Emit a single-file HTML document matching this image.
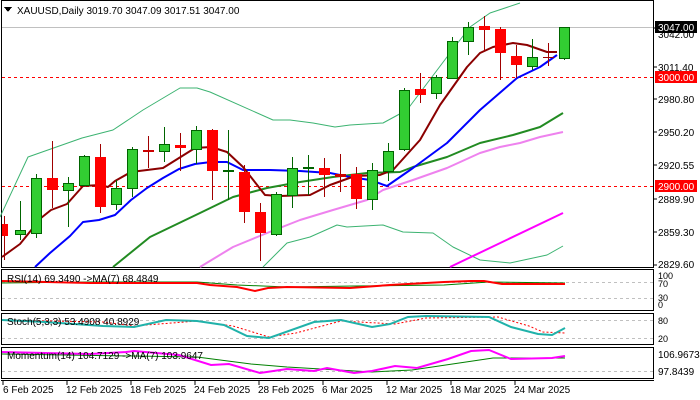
<!DOCTYPE html>
<html><head><meta charset="utf-8"><style>
html,body{margin:0;padding:0;background:#fff;width:700px;height:400px;overflow:hidden}
svg{display:block}
text{font-family:"Liberation Sans",sans-serif;font-size:10px;fill:#000}
</style></head><body>
<svg width="700" height="400" viewBox="0 0 700 400" xmlns="http://www.w3.org/2000/svg" shape-rendering="crispEdges">
<rect width="700" height="400" fill="#fff"/>
<!-- frames -->
<rect x="1.5" y="0.5" width="652" height="267" fill="none" stroke="#000"/>
<rect x="1.5" y="269.5" width="652" height="41" fill="none" stroke="#000"/>
<rect x="1.5" y="313.5" width="652" height="31" fill="none" stroke="#000"/>
<rect x="1.5" y="347.5" width="652" height="31" fill="none" stroke="#000"/>
<line x1="1" y1="380.5" x2="654" y2="380.5" stroke="#000"/>
<!-- price line and levels -->
<line x1="2" y1="27.5" x2="653" y2="27.5" stroke="#c0c0c0"/>
<line x1="2" y1="77.5" x2="653" y2="77.5" stroke="#f00" stroke-dasharray="3,3"/>
<line x1="2" y1="186.5" x2="653" y2="186.5" stroke="#f00" stroke-dasharray="3,3"/>
<g shape-rendering="auto" fill="none" stroke-linejoin="round">
<!-- bands -->
<polyline stroke="#3cb371" stroke-width="1" points="0,217 28,157 82,138 113,130 143,110 180,88 197,88 210,92 273,120 290,120 313,123 335,127 350,125 383,123 407,110 450,53 470,27 490,13 520,3"/>
<polyline stroke="#3cb371" stroke-width="1" points="263,267 287,243 310,237 337,225 347,227 383,225 403,232 433,233 453,247 480,260 510,263 547,255 563,246"/>
<!-- violet -->
<polyline stroke="#ee82ee" stroke-width="2" points="200,267 233,247 267,233 300,220 333,210 367,200 383,190 413,180 447,168 480,153 500,147 520,143 540,137 563,132"/>
<!-- magenta -->
<polyline stroke="#ff00ff" stroke-width="2" points="450,267 563,213"/>
<!-- green MA -->
<polyline stroke="#228b22" stroke-width="2" points="113,267 150,237 200,213 233,197 267,188 300,182 333,177 367,173 400,172 413,167 447,157 480,143 513,135 540,127 563,113"/>
<!-- blue -->
<polyline stroke="#0000ff" stroke-width="2" points="35,267 50,253 70,236 83,222 99,220 115,215 131,200 147,188 163,178 179,169 195,164 211,162 227,162 243,170 270,170 300,171 330,173 350,177 370,180 387,186 413,168 447,143 480,110 517,78 540,67 557,55"/>
<!-- dark red -->
<polyline stroke="#8b0000" stroke-width="2" points="2,257 20,244 41,218 51,210 67,204 83,186 100,185 108,187 115,181 131,172 147,170 163,168 179,158 195,148 211,147 227,152 243,167 265,195 280,196 310,195 330,185 355,176 380,175 393,170 420,140 440,105 467,67 480,53 493,47 513,43 527,45 547,52 557,52"/>
</g>
<!-- candles -->
<g id="c" stroke-width="1"></g>
<!-- axis labels main -->
<g>
<text x="658" y="38">3042.00</text>
<rect x="655" y="21" width="42" height="12" fill="#000"/><text x="658" y="31" style="fill:#fff">3047.00</text>
<text x="658" y="71">3011.40</text>
<rect x="655" y="71" width="42" height="12" fill="#f00"/><text x="658" y="81" style="fill:#fff">3000.00</text>
<text x="658" y="103">2980.80</text>
<text x="658" y="136">2950.20</text>
<text x="658" y="169">2920.55</text>
<rect x="655" y="180" width="42" height="12" fill="#f00"/><text x="658" y="190" style="fill:#fff">2900.00</text>
<text x="658" y="203">2889.90</text>
<text x="658" y="236">2859.30</text>
<text x="658" y="268">2829.60</text>
</g>
<g stroke="#000"><line x1="653" y1="28" x2="657" y2="28"/><line x1="653" y1="67" x2="657" y2="67"/><line x1="653" y1="99" x2="657" y2="99"/><line x1="653" y1="132" x2="657" y2="132"/><line x1="653" y1="165" x2="657" y2="165"/><line x1="653" y1="199" x2="657" y2="199"/><line x1="653" y1="232" x2="657" y2="232"/><line x1="653" y1="265" x2="657" y2="265"/></g>
<path d="M4 7 L12 7 L8 12 Z" fill="#000"/>
<text x="17" y="14">XAUUSD,Daily  3019.70 3047.09 3017.51 3047.00</text>
<!-- RSI -->
<line x1="2" y1="282.5" x2="653" y2="282.5" stroke="#c0c0c0" stroke-dasharray="3,3"/>
<line x1="2" y1="298.5" x2="653" y2="298.5" stroke="#c0c0c0" stroke-dasharray="3,3"/>
<g shape-rendering="auto" fill="none">
<polyline stroke="#008000" stroke-width="1" points="2,283 90,282 197,282 237,285 287,287 354,286 444,285 489,282 565,283"/>
<polyline stroke="#f00" stroke-width="2" points="2,281 90,283 134,283 197,283 210,285 237,287 255,291 268,288 287,287 350,288 390,285 444,282 471,281 484,281 502,284 565,284"/>
</g>
<text x="7" y="282">RSI(14) 69.3490  -&gt;MA(7) 68.4849</text>
<text x="658" y="279" style="font-size:9px">100</text><text x="658" y="287" style="font-size:9px">70</text><text x="658" y="301" style="font-size:9px">30</text><text x="658" y="308" style="font-size:9px">0</text>
<!-- Stoch -->
<line x1="2" y1="320.5" x2="653" y2="320.5" stroke="#c0c0c0" stroke-dasharray="3,3"/>
<line x1="2" y1="338.5" x2="653" y2="338.5" stroke="#c0c0c0" stroke-dasharray="3,3"/>
<g shape-rendering="auto" fill="none">
<polyline stroke="#f00" stroke-width="1" stroke-dasharray="2,2" points="2,320 103,322 134,326 197,321 233,326 269,337 296,333 341,321 395,324 426,318 498,317 529,326 543,332 565,333"/>
<polyline stroke="#20b2aa" stroke-width="2" points="2,320 45,322 103,326 134,327 166,320 197,321 224,325 247,336 269,338 314,322 341,320 372,327 390,324 408,317 426,316 489,317 511,327 538,334 552,335 565,328"/>
</g>
<text x="7" y="325">Stoch(5,3,3) 53.4908 40.8929</text>
<text x="658" y="324" style="font-size:9px">80</text><text x="658" y="342" style="font-size:9px">20</text>
<!-- Momentum -->
<line x1="2" y1="371.5" x2="653" y2="371.5" stroke="#c0c0c0" stroke-dasharray="3,3"/>
<g shape-rendering="auto" fill="none">
<polyline stroke="#008000" stroke-width="1" points="2,354 197,357 251,364 287,367 372,372 412,370 493,358 565,358"/>
<polyline stroke="#ff00ff" stroke-width="2" points="2,352 45,353 90,354 126,352 134,351 179,355 211,365 229,364 260,373 287,369 314,371 327,368 354,373 372,371 395,366 417,368 448,359 471,351 489,350 511,359 552,358 565,356"/>
</g>
<text x="7" y="359">Momentum(14) 104.7129  -&gt;MA(7) 103.9647</text>
<text x="658" y="358">106.9673</text><text x="658" y="375">97.8439</text>
<!-- dates -->
<g stroke="#000"><line x1="3" y1="380" x2="3" y2="385"/><line x1="67" y1="380" x2="67" y2="385"/><line x1="131" y1="380" x2="131" y2="385"/><line x1="195" y1="380" x2="195" y2="385"/><line x1="259" y1="380" x2="259" y2="385"/><line x1="323" y1="380" x2="323" y2="385"/><line x1="387" y1="380" x2="387" y2="385"/><line x1="451" y1="380" x2="451" y2="385"/><line x1="515" y1="380" x2="515" y2="385"/></g>
<text x="3" y="393">6 Feb 2025</text><text x="66" y="393">12 Feb 2025</text><text x="130" y="393">18 Feb 2025</text><text x="194" y="393">24 Feb 2025</text><text x="258" y="393">28 Feb 2025</text><text x="322" y="393">6 Mar 2025</text><text x="386" y="393">12 Mar 2025</text><text x="450" y="393">18 Mar 2025</text><text x="514" y="393">24 Mar 2025</text>
<!-- candles drawn explicitly -->
<g>
<line x1="4.5" y1="216" x2="4.5" y2="260" stroke="#a00000"/><rect x="2" y="224" width="6" height="12" fill="#f00"/>
<line x1="20.5" y1="201" x2="20.5" y2="240" stroke="#006400"/><rect x="15.5" y="230.5" width="10" height="4" fill="#32cd32" stroke="#006400"/>
<line x1="36.5" y1="174" x2="36.5" y2="238" stroke="#006400"/><rect x="31.5" y="178.5" width="10" height="55" fill="#32cd32" stroke="#006400"/>
<line x1="52.5" y1="141" x2="52.5" y2="208" stroke="#a00000"/><rect x="47" y="178" width="11" height="12" fill="#f00"/>
<line x1="68.5" y1="177" x2="68.5" y2="227" stroke="#006400"/><rect x="63.5" y="183.5" width="10" height="7" fill="#32cd32" stroke="#006400"/>
<line x1="84.5" y1="155" x2="84.5" y2="186" stroke="#006400"/><rect x="79.5" y="156.5" width="10" height="29" fill="#32cd32" stroke="#006400"/>
<line x1="100.5" y1="144" x2="100.5" y2="213" stroke="#a00000"/><rect x="95" y="157" width="11" height="50" fill="#f00"/>
<line x1="116.5" y1="180" x2="116.5" y2="210" stroke="#006400"/><rect x="111.5" y="188.5" width="10" height="16" fill="#32cd32" stroke="#006400"/>
<line x1="132.5" y1="147" x2="132.5" y2="197" stroke="#006400"/><rect x="127.5" y="149.5" width="10" height="39" fill="#32cd32" stroke="#006400"/>
<line x1="148.5" y1="136" x2="148.5" y2="168" stroke="#a00000"/><rect x="143" y="150" width="11" height="2" fill="#c00"/>
<line x1="164.5" y1="127" x2="164.5" y2="162" stroke="#006400"/><rect x="159.5" y="144.5" width="10" height="7" fill="#32cd32" stroke="#006400"/>
<line x1="180.5" y1="133" x2="180.5" y2="171" stroke="#a00000"/><rect x="175" y="145" width="11" height="3" fill="#f00"/>
<line x1="196.5" y1="126" x2="196.5" y2="164" stroke="#006400"/><rect x="191.5" y="130.5" width="10" height="19" fill="#32cd32" stroke="#006400"/>
<line x1="212.5" y1="129" x2="212.5" y2="200" stroke="#a00000"/><rect x="207" y="130" width="11" height="41" fill="#f00"/>
<line x1="228.5" y1="130" x2="228.5" y2="200" stroke="#006400"/><rect x="223" y="170" width="11" height="2" fill="#006400"/>
<line x1="244.5" y1="165" x2="244.5" y2="223" stroke="#a00000"/><rect x="239" y="172" width="11" height="40" fill="#f00"/>
<line x1="260.5" y1="203" x2="260.5" y2="261" stroke="#a00000"/><rect x="255" y="212" width="11" height="21" fill="#f00"/>
<line x1="276.5" y1="192" x2="276.5" y2="236" stroke="#006400"/><rect x="271.5" y="194.5" width="10" height="40" fill="#32cd32" stroke="#006400"/>
<line x1="292.5" y1="157" x2="292.5" y2="208" stroke="#006400"/><rect x="287.5" y="168.5" width="10" height="27" fill="#32cd32" stroke="#006400"/>
<line x1="308.5" y1="155" x2="308.5" y2="195" stroke="#006400"/><rect x="303" y="167" width="11" height="2" fill="#006400"/>
<line x1="324.5" y1="158" x2="324.5" y2="197" stroke="#a00000"/><rect x="319" y="168" width="11" height="7" fill="#f00"/>
<line x1="340.5" y1="154" x2="340.5" y2="192" stroke="#a00000"/><rect x="335" y="174" width="11" height="3" fill="#c00"/>
<line x1="356.5" y1="167" x2="356.5" y2="209" stroke="#a00000"/><rect x="351" y="174" width="11" height="25" fill="#f00"/>
<line x1="372.5" y1="163" x2="372.5" y2="210" stroke="#006400"/><rect x="367.5" y="170.5" width="10" height="29" fill="#32cd32" stroke="#006400"/>
<line x1="388.5" y1="143" x2="388.5" y2="181" stroke="#006400"/><rect x="383.5" y="151.5" width="10" height="20" fill="#32cd32" stroke="#006400"/>
<line x1="404.5" y1="88" x2="404.5" y2="151" stroke="#006400"/><rect x="399.5" y="90.5" width="10" height="59" fill="#32cd32" stroke="#006400"/>
<line x1="420.5" y1="73" x2="420.5" y2="103" stroke="#a00000"/><rect x="415" y="89" width="11" height="6" fill="#f00"/>
<line x1="436.5" y1="75" x2="436.5" y2="99" stroke="#006400"/><rect x="431.5" y="77.5" width="10" height="16" fill="#32cd32" stroke="#006400"/>
<line x1="452.5" y1="37" x2="452.5" y2="79" stroke="#006400"/><rect x="447.5" y="41.5" width="10" height="37" fill="#32cd32" stroke="#006400"/>
<line x1="468.5" y1="22" x2="468.5" y2="55" stroke="#006400"/><rect x="463.5" y="27.5" width="10" height="14" fill="#32cd32" stroke="#006400"/>
<line x1="484.5" y1="16" x2="484.5" y2="51" stroke="#a00000"/><rect x="479" y="26" width="11" height="4" fill="#f00"/>
<line x1="500.5" y1="27" x2="500.5" y2="80" stroke="#a00000"/><rect x="495" y="29" width="11" height="24" fill="#f00"/>
<line x1="516.5" y1="45" x2="516.5" y2="78" stroke="#a00000"/><rect x="511" y="56" width="11" height="9" fill="#f00"/>
<line x1="532.5" y1="39" x2="532.5" y2="70" stroke="#006400"/><rect x="527.5" y="57.5" width="10" height="9" fill="#32cd32" stroke="#006400"/>
<line x1="548.5" y1="43" x2="548.5" y2="66" stroke="#a00000"/><rect x="543" y="57" width="11" height="1" fill="#a00000"/>
<line x1="564.5" y1="27" x2="564.5" y2="60" stroke="#006400"/><rect x="559.5" y="27.5" width="10" height="31" fill="#32cd32" stroke="#006400"/>
</g>
</svg>
</body></html>
